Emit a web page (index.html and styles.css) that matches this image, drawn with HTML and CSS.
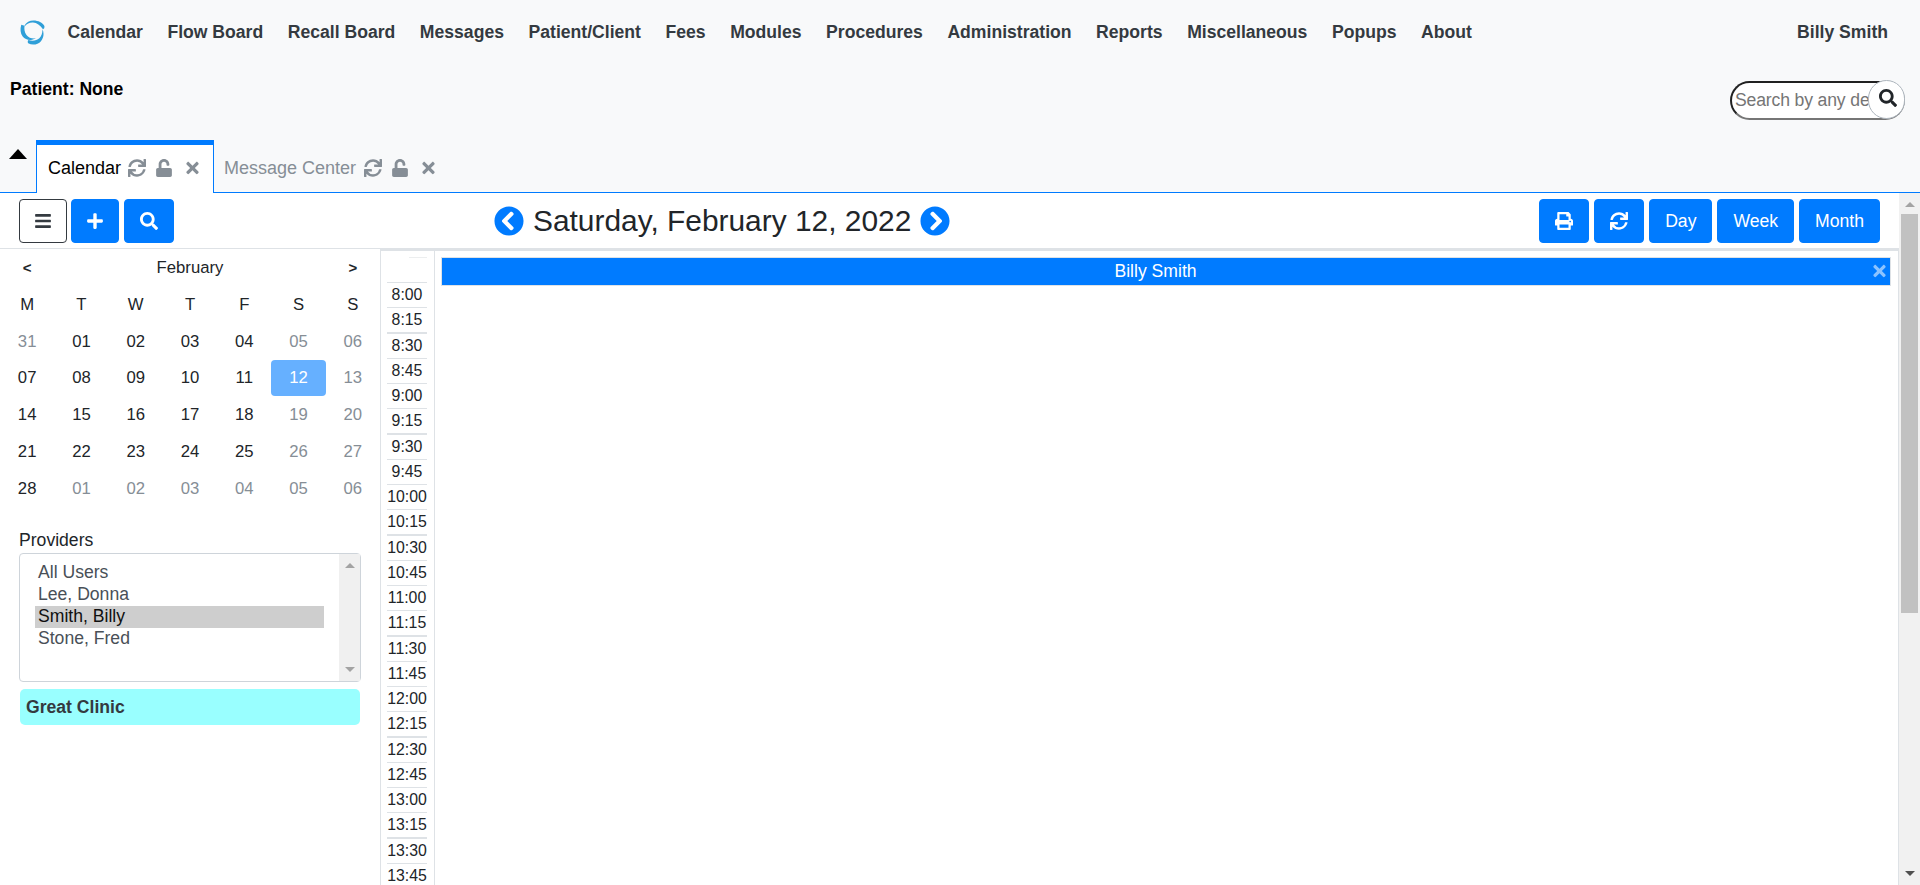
FILE: index.html
```html
<!DOCTYPE html>
<html lang="en">
<head>
<meta charset="utf-8">
<title>Calendar</title>
<link rel="stylesheet" href="styles.css">
</head>
<body>
<svg class="defs" aria-hidden="true">
  <symbol id="sync" viewBox="0 0 512 512"><path d="M440.65 12.57l4 82.77A247.16 247.16 0 0 0 255.83 8C134.73 8 33.91 94.92 12.29 209.82A12 12 0 0 0 24.09 224h49.05a12 12 0 0 0 11.67-9.26 175.91 175.91 0 0 1 317-56.94l-101.46-4.86a12 12 0 0 0-12.57 12v47.41a12 12 0 0 0 12 12H500a12 12 0 0 0 12-12V12a12 12 0 0 0-12-12h-47.37a12 12 0 0 0-11.98 12.57zM255.83 432a175.61 175.61 0 0 1-146-77.8l101.8 4.87a12 12 0 0 0 12.57-12v-47.4a12 12 0 0 0-12-12H12a12 12 0 0 0-12 12V500a12 12 0 0 0 12 12h47.35a12 12 0 0 0 12-12.6l-4.15-82.57A247.17 247.17 0 0 0 255.83 504c121.11 0 221.93-86.92 243.55-201.82a12 12 0 0 0-11.8-14.18h-49.05a12 12 0 0 0-11.67 9.26A175.86 175.86 0 0 1 255.83 432z"/></symbol>
  <symbol id="unlock" viewBox="0 0 448 512"><path d="M400 256H152V152.9c0-39.6 31.7-72.5 71.3-72.9 40-.4 72.7 32.1 72.7 72v16c0 13.3 10.7 24 24 24h32c13.3 0 24-10.7 24-24v-16C376 68 307.5-.3 223.5 0 139.5.3 72 69.5 72 153.5V256H48c-26.5 0-48 21.5-48 48v160c0 26.5 21.5 48 48 48h352c26.5 0 48-21.5 48-48V304c0-26.5-21.5-48-48-48z"/></symbol>
  <symbol id="times" viewBox="0 0 352 512"><path d="M242.72 256l100.07-100.07c12.28-12.28 12.28-32.19 0-44.48l-22.24-22.24c-12.28-12.28-32.19-12.28-44.48 0L176 189.28 75.93 89.21c-12.28-12.28-32.19-12.28-44.48 0L9.21 111.45c-12.28 12.28-12.28 32.19 0 44.48L109.28 256 9.21 356.07c-12.28 12.28-12.28 32.19 0 44.48l22.24 22.24c12.28 12.28 32.2 12.28 44.48 0L176 322.72l100.07 100.07c12.28 12.28 32.2 12.28 44.48 0l22.24-22.24c12.28-12.28 12.28-32.19 0-44.48L242.72 256z"/></symbol>
  <symbol id="search" viewBox="0 0 512 512"><path d="M505 442.7L405.3 343c-4.5-4.5-10.6-7-17-7H372c27.6-35.3 44-79.7 44-128C416 93.1 322.9 0 208 0S0 93.1 0 208s93.1 208 208 208c48.3 0 92.7-16.4 128-44v16.3c0 6.4 2.5 12.5 7 17l99.7 99.7c9.4 9.4 24.6 9.4 33.9 0l28.3-28.3c9.4-9.4 9.4-24.6.1-34zM208 336c-70.7 0-128-57.2-128-128 0-70.7 57.2-128 128-128 70.7 0 128 57.2 128 128 0 70.7-57.2 128-128 128z"/></symbol>
  <symbol id="bars" viewBox="0 0 448 512"><path d="M16 132h416c8.837 0 16-7.163 16-16V76c0-8.837-7.163-16-16-16H16C7.163 60 0 67.163 0 76v40c0 8.837 7.163 16 16 16zm0 160h416c8.837 0 16-7.163 16-16v-40c0-8.837-7.163-16-16-16H16c-8.837 0-16 7.163-16 16v40c0 8.837 7.163 16 16 16zm0 160h416c8.837 0 16-7.163 16-16v-40c0-8.837-7.163-16-16-16H16c-8.837 0-16 7.163-16 16v40c0 8.837 7.163 16 16 16z"/></symbol>
  <symbol id="plus" viewBox="0 0 448 512"><path d="M416 208H272V64c0-17.67-14.33-32-32-32h-32c-17.67 0-32 14.33-32 32v144H32c-17.67 0-32 14.33-32 32v32c0 17.67 14.33 32 32 32h144v144c0 17.67 14.33 32 32 32h32c17.67 0 32-14.33 32-32V304h144c17.67 0 32-14.33 32-32v-32c0-17.67-14.33-32-32-32z"/></symbol>
  <symbol id="print" viewBox="0 0 512 512"><path d="M448 192V77.25c0-8.49-3.37-16.62-9.37-22.63L393.37 9.37c-6-6-14.14-9.37-22.63-9.37H96C78.33 0 64 14.33 64 32v160c-35.35 0-64 28.65-64 64v112c0 8.84 7.16 16 16 16h48v96c0 17.67 14.33 32 32 32h320c17.67 0 32-14.33 32-32v-96h48c8.84 0 16-7.16 16-16V256c0-35.35-28.65-64-64-64zm-64 256H128v-96h256v96zm0-224H128V64h192v48c0 8.84 7.16 16 16 16h48v96zm48 72c-13.25 0-24-10.75-24-24 0-13.26 10.75-24 24-24s24 10.74 24 24c0 13.25-10.75 24-24 24z"/></symbol>
  <symbol id="prev" viewBox="0 0 512 512"><path d="M256 504C119 504 8 393 8 256S119 8 256 8s248 111 248 248-111 248-248 248zM142.1 273l135.5 135.5c9.4 9.4 24.6 9.4 33.9 0l17-17c9.4-9.4 9.4-24.6 0-33.9L226.9 256l101.6-101.6c9.4-9.4 9.4-24.6 0-33.9l-17-17c-9.4-9.4-24.6-9.4-33.9 0L142.1 239c-9.4 9.4-9.4 24.6 0 34z"/></symbol>
</svg>

<header class="top">
  <nav class="menu">
    <svg class="logo" viewBox="0 0 26 26"><path d="M4.500 6C6.500 2.500 10 .6 14 .6c5 0 9.500 2.200 11.400 5.600 .2 1.800-.4 3-1.500 3.300C21 5.500 17.500 3 13.500 2.700 10 2.500 7 4 5.500 6z"/><path d="M1.300 5C0 9.500.3 14 2.800 17.200 5 20 9 21.200 12.500 20.500c1.700-.3 3-.8 4-1.500-4 .5-7.500-.5-9.800-3.500C4.500 12.500 4.200 9 4.800 6z"/><path d="M23.300 9.500c2 4 1.400 9-1.500 12.500-3 3.700-9 4.500-13.300 2.300-.8-1.300-.5-2.800.3-3.400 4.300 1.300 8.500.6 11.300-1.800 2.500-2.400 3.400-6 3.200-9.600z"/></svg>
    <a>Calendar</a><a>Flow Board</a><a>Recall Board</a><a>Messages</a><a>Patient/Client</a><a>Fees</a><a>Modules</a><a>Procedures</a><a>Administration</a><a>Reports</a><a>Miscellaneous</a><a>Popups</a><a>About</a>
    <a class="user">Billy Smith</a>
  </nav>
  <div class="patient">
    <b>Patient: None</b>
    <div class="find"><span class="find-text">Search by any demographics</span><span class="find-btn"><svg class="i18"><use href="#search"/></svg></span></div>
  </div>
  <div class="tabs">
    <span class="caret"></span>
    <div class="tab active"><span>Calendar</span><svg class="i18"><use href="#sync"/></svg><svg class="lock"><use href="#unlock"/></svg><svg class="x"><use href="#times"/></svg></div>
    <div class="tab"><span>Message Center</span><svg class="i18"><use href="#sync"/></svg><svg class="lock"><use href="#unlock"/></svg><svg class="x"><use href="#times"/></svg></div>
  </div>
</header>

<div class="frame">
  <div class="page">
    <div class="toolbar">
      <button class="btn outline"><svg class="i16n"><use href="#bars"/></svg></button>
      <button class="btn"><svg class="i16n"><use href="#plus"/></svg></button>
      <button class="btn lookup"><svg class="i18"><use href="#search"/></svg></button>
      <div class="date"><svg class="arrow"><use href="#prev"/></svg><span>Saturday, February 12, 2022</span><svg class="arrow flip"><use href="#prev"/></svg></div>
      <div class="views">
        <button class="btn"><svg class="i18"><use href="#print"/></svg></button>
        <button class="btn"><svg class="i18"><use href="#sync"/></svg></button>
        <button class="btn">Day</button><button class="btn">Week</button><button class="btn">Month</button>
      </div>
    </div>
    <div class="content">
      <aside class="side">
        <div class="mini">
          <b class="nav">&lt;</b><span class="month">February</span><b class="nav">&gt;</b>
          <span>M</span><span>T</span><span>W</span><span>T</span><span>F</span><span>S</span><span>S</span>
          <i>31</i><span>01</span><span>02</span><span>03</span><span>04</span><i>05</i><i>06</i>
          <span>07</span><span>08</span><span>09</span><span>10</span><span>11</span><span class="today">12</span><i>13</i>
          <span>14</span><span>15</span><span>16</span><span>17</span><span>18</span><i>19</i><i>20</i>
          <span>21</span><span>22</span><span>23</span><span>24</span><span>25</span><i>26</i><i>27</i>
          <span>28</span><i>01</i><i>02</i><i>03</i><i>04</i><i>05</i><i>06</i>
        </div>
        <div class="label">Providers</div>
        <div class="list">
          <div class="options"><div>All Users</div><div>Lee, Donna</div><div class="sel">Smith, Billy</div><div>Stone, Fred</div></div>
          <div class="listbar"><span class="up"></span><span class="down"></span></div>
        </div>
        <div class="clinic">Great Clinic</div>
      </aside>
      <div class="times">
        <div class="blank"></div>
        <div>8:00</div><div>8:15</div><div>8:30</div><div>8:45</div><div>9:00</div><div>9:15</div><div>9:30</div><div>9:45</div><div>10:00</div><div>10:15</div><div>10:30</div><div>10:45</div><div>11:00</div><div>11:15</div><div>11:30</div><div>11:45</div><div>12:00</div><div>12:15</div><div>12:30</div><div>12:45</div><div>13:00</div><div>13:15</div><div>13:30</div><div>13:45</div>
      </div>
      <main class="schedule"><div class="provider"><span>Billy Smith</span><svg class="x"><use href="#times"/></svg></div></main>
    </div>
  </div>
  <div class="scroll"><span class="up"></span><div class="thumb"></div><span class="down dark"></span></div>
</div>
</body>
</html>
```
FILE: styles.css
```css
* { box-sizing: border-box; }
body { margin: 0; height: 885px; overflow: hidden; display: flex; flex-direction: column; background: #fff; color: #212529; font: 17.6px/26.4px "Liberation Sans", Arial, sans-serif; }
svg { fill: currentColor; display: block; flex: none; }
.defs { position: absolute; width: 0; height: 0; }
.i18 { width: 18px; height: 18px; }
.i16n { width: 16px; height: 18px; }
.lock { width: 16px; height: 18px; }
.x { width: 13px; height: 18px; }

.top { height: 193px; flex: none; background: #f8f9fa; display: flex; flex-direction: column; border-bottom: 1px solid #007bff; }
.menu { height: 64px; display: flex; align-items: center; gap: 24.55px; padding: 0 32px 0 20px; font-weight: bold; color: #343a40; white-space: nowrap; }
.logo { width: 25px; height: 25px; margin-right: -2px; fill: #2f9fd8; }
.user { margin-left: auto; }
.patient { height: 76px; display: flex; justify-content: space-between; padding: 12px 15px 0 10px; color: #000; }
.find { position: relative; width: 175px; height: 39px; margin-top: 5px; border: 2px solid #767676; border-top-color: #212121; border-left-color: #212121; border-radius: 20px; background: #fff; color: #757575; }
.find-text { display: block; width: 137px; padding-left: 3px; line-height: 34px; overflow: hidden; white-space: nowrap; letter-spacing: -.15px; }
.find-btn { position: absolute; right: -2px; top: -3px; width: 37px; height: 39px; border: 1px solid #adb5bd; border-radius: 19px; background: #fff; color: #212529; display: flex; align-items: center; justify-content: center; padding: 0 0 3px 3px; }
.tabs { height: 52px; display: flex; align-items: stretch; font-size: 18px; }
.caret { width: 36px; padding: 9px 0 0 9px; }
.caret::before { content: ""; display: block; width: 0; border: 9px solid transparent; border-top: 0; border-bottom: 10px solid #000; }
.tab { display: flex; align-items: center; gap: 10px; padding: 4px 11px 0 10px; color: #868e96; }
.tab span { margin-right: -2px; }
.tab .x { margin-left: 4px; }
.tab.active { width: 178px; background: #fff; border: 1px solid #007bff; border-top-width: 5px; border-bottom: 0; padding: 0 0 2px 11px; margin-bottom: -1px; }
.tab.active span { width: 72px; color: #000; }

.frame { flex: 1; display: flex; min-height: 0; }
.page { flex: 1; display: flex; flex-direction: column; min-width: 0; }
.toolbar { height: 55px; flex: none; display: flex; align-items: flex-start; padding: 6px 19px; gap: 4px; }
.btn { height: 44px; padding: 0 15px; border: 1px solid #007bff; border-radius: 4px; background: #007bff; color: #fff; font: inherit; display: flex; align-items: center; }
.btn.outline { background: #fff; border-color: #343a40; color: #343a40; }
.lookup { margin-left: 1px; }
.views { margin-left: auto; display: flex; gap: 5px; }
.date { margin-left: 316px; height: 44px; display: flex; align-items: center; gap: 9px; font-size: 29.9px; white-space: nowrap; }
.arrow { width: 30px; height: 30px; color: #007bff; }
.flip { transform: scaleX(-1); }
.content { flex: 1; display: flex; min-height: 0; border-top: 1px solid #dee2e6; }
.side { width: 380px; flex: none; }
.mini { display: grid; grid-template-columns: repeat(7, 1fr); grid-auto-rows: 36.75px; width: 380px; padding-top: 1px; font-size: 16.7px; line-height: 36px; text-align: center; }
.mini i { font-style: normal; color: #868e96; }
.mini .month { grid-column: span 5; }
.mini .nav { font-size: 15px; }
.mini .today { height: 36px; background: #66b0ff; color: #fff; border-radius: 4px; }
.label { height: 25.75px; margin: 20px 0 0 19px; }
.list { margin: 0 0 0 19px; width: 342px; height: 129px; border: 1px solid #ced4da; border-radius: 4px; display: flex; color: #495057; line-height: 20px; }
.options { flex: 1; padding: 8px 15px; }
.options div { height: 22px; padding-left: 3px; }
.options .sel { background: #cecece; color: #101010; }
.listbar { width: 21px; background: #f0f0f0; display: flex; flex-direction: column; justify-content: space-between; align-items: center; padding: 9px 0; }
.up { border: 5px solid transparent; border-top: 0; border-bottom-color: #a3a3a3; }
.down { border: 5px solid transparent; border-bottom: 0; border-top-color: #a3a3a3; }
.dark { border-top-color: #505050; }
.clinic { margin: 7px 0 0 20px; width: 340px; height: 36px; border-radius: 5px; background: #9ff; color: #343a40; font-weight: bold; line-height: 36px; padding-left: 6px; }
.times { width: 55px; flex: none; border-left: 1px solid #dee2e6; border-right: 1px solid #dee2e6; border-top: 2px solid #dee2e6; padding: 0 7px 0 6px; font-size: 15.84px; line-height: 23px; }
.times div { height: 25px; border-top: 1px solid #dee2e6; display: flex; justify-content: center; }
.times div:nth-child(4n) { height: 26px; border-top-width: 2px; }
.times .blank { height: 31px; border: 0; padding-top: 6px; justify-content: flex-end; }
.blank::before { content: ""; width: 18px; height: 1px; background: #eceeef; }
.schedule { flex: 1; border-top: 2px solid #dee2e6; border-right: 1px solid #dee2e6; padding: 6px 7px 0 6px; }
.provider { height: 29px; border: 1px solid #dee2e6; background: #007bff; color: #fff; display: flex; align-items: center; padding-right: 4px; line-height: 27px; }
.provider span { flex: 1; text-align: center; padding-right: 4px; }
.provider .x { opacity: .55; margin-top: -2px; }
.scroll { width: 21px; flex: none; background: #f1f1f1; display: flex; flex-direction: column; align-items: center; padding: 9px 0; }
.thumb { width: 17px; height: 399px; margin-top: 7px; background: #c1c1c1; }
.scroll .down { margin-top: auto; }
```
